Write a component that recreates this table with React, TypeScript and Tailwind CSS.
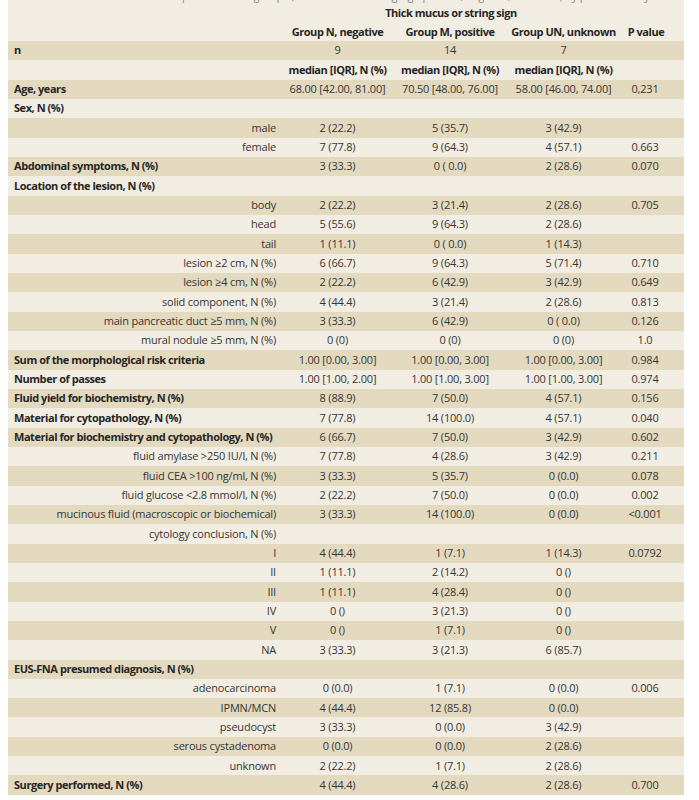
import React from "react";

type Row = {
  label: string;
  bold?: boolean;
  n?: string;
  m?: string;
  un?: string;
  p?: string;
  valuesBold?: boolean;
};

const rows: Row[] = [
  { label: "n", bold: true, n: "9", m: "14", un: "7" },
  { label: "", n: "median [IQR], N (%)", m: "median [IQR], N (%)", un: "median [IQR], N (%)", valuesBold: true },
  { label: "Age, years", bold: true, n: "68.00 [42.00, 81.00]", m: "70.50 [48.00, 76.00]", un: "58.00 [46.00, 74.00]", p: "0,231" },
  { label: "Sex, N (%)", bold: true },
  { label: "male", n: "2 (22.2)", m: "5 (35.7)", un: "3 (42.9)" },
  { label: "female", n: "7 (77.8)", m: "9 (64.3)", un: "4 (57.1)", p: "0.663" },
  { label: "Abdominal symptoms, N (%)", bold: true, n: "3 (33.3)", m: "0 ( 0.0)", un: "2 (28.6)", p: "0.070" },
  { label: "Location of the lesion, N (%)", bold: true },
  { label: "body", n: "2 (22.2)", m: "3 (21.4)", un: "2 (28.6)", p: "0.705" },
  { label: "head", n: "5 (55.6)", m: "9 (64.3)", un: "2 (28.6)" },
  { label: "tail", n: "1 (11.1)", m: "0 ( 0.0)", un: "1 (14.3)" },
  { label: "lesion ≥2 cm, N (%)", n: "6 (66.7)", m: "9 (64.3)", un: "5 (71.4)", p: "0.710" },
  { label: "lesion ≥4 cm, N (%)", n: "2 (22.2)", m: "6 (42.9)", un: "3 (42.9)", p: "0.649" },
  { label: "solid component, N (%)", n: "4 (44.4)", m: "3 (21.4)", un: "2 (28.6)", p: "0.813" },
  { label: "main pancreatic duct ≥5 mm, N (%)", n: "3 (33.3)", m: "6 (42.9)", un: "0 ( 0.0)", p: "0.126" },
  { label: "mural nodule ≥5 mm, N (%)", n: "0 (0)", m: "0 (0)", un: "0 (0)", p: "1.0" },
  { label: "Sum of the morphological risk criteria", bold: true, n: "1.00 [0.00, 3.00]", m: "1.00 [0.00, 3.00]", un: "1.00 [0.00, 3.00]", p: "0.984" },
  { label: "Number of passes", bold: true, n: "1.00 [1.00, 2.00]", m: "1.00 [1.00, 3.00]", un: "1.00 [1.00, 3.00]", p: "0.974" },
  { label: "Fluid yield for biochemistry, N (%)", bold: true, n: "8 (88.9)", m: "7 (50.0)", un: "4 (57.1)", p: "0.156" },
  { label: "Material for cytopathology, N (%)", bold: true, n: "7 (77.8)", m: "14 (100.0)", un: "4 (57.1)", p: "0.040" },
  { label: "Material for biochemistry and cytopathology, N (%)", bold: true, n: "6 (66.7)", m: "7 (50.0)", un: "3 (42.9)", p: "0.602" },
  { label: "fluid amylase >250 IU/l, N (%)", n: "7 (77.8)", m: "4 (28.6)", un: "3 (42.9)", p: "0.211" },
  { label: "fluid CEA >100 ng/ml, N (%)", n: "3 (33.3)", m: "5 (35.7)", un: "0 (0.0)", p: "0.078" },
  { label: "fluid glucose <2.8 mmol/l, N (%)", n: "2 (22.2)", m: "7 (50.0)", un: "0 (0.0)", p: "0.002" },
  { label: "mucinous fluid (macroscopic or biochemical)", n: "3 (33.3)", m: "14 (100.0)", un: "0 (0.0)", p: "<0.001" },
  { label: "cytology conclusion, N (%)" },
  { label: "I", n: "4 (44.4)", m: "1 (7.1)", un: "1 (14.3)", p: "0.0792" },
  { label: "II", n: "1 (11.1)", m: "2 (14.2)", un: "0 ()" },
  { label: "III", n: "1 (11.1)", m: "4 (28.4)", un: "0 ()" },
  { label: "IV", n: "0 ()", m: "3 (21.3)", un: "0 ()" },
  { label: "V", n: "0 ()", m: "1 (7.1)", un: "0 ()" },
  { label: "NA", n: "3 (33.3)", m: "3 (21.3)", un: "6 (85.7)" },
  { label: "EUS-FNA presumed diagnosis, N (%)", bold: true },
  { label: "adenocarcinoma", n: "0 (0.0)", m: "1 (7.1)", un: "0 (0.0)", p: "0.006" },
  { label: "IPMN/MCN", n: "4 (44.4)", m: "12 (85.8)", un: "0 (0.0)" },
  { label: "pseudocyst", n: "3 (33.3)", m: "0 (0.0)", un: "3 (42.9)" },
  { label: "serous cystadenoma", n: "0 (0.0)", m: "0 (0.0)", un: "2 (28.6)" },
  { label: "unknown", n: "2 (22.2)", m: "1 (7.1)", un: "2 (28.6)" },
  { label: "Surgery performed, N (%)", bold: true, n: "4 (44.4)", m: "4 (28.6)", un: "2 (28.6)", p: "0.700" },
];

const strong = "font-bold tracking-[-0.45px] text-[#262626]";

function DataRow({ row, index }: { row: Row; index: number }) {
  const vb = row.valuesBold ? strong : "";
  return (
    <div
      className={`flex h-[19.33px] items-center ${
        index % 2 === 0 ? "bg-[#e2d9bf]" : "bg-[#f2ede2]"
      }`}
    >
      <div
        className={`w-[277px] whitespace-nowrap ${
          row.bold ? `pl-[6px] text-left ${strong}` : "pr-[9px] text-right"
        }`}
      >
        {row.label}
      </div>
      <div className={`w-[105px] text-center whitespace-pre ${vb}`}>{row.n}</div>
      <div className={`w-[120px] text-center whitespace-pre ${vb}`}>{row.m}</div>
      <div className={`w-[107px] text-center whitespace-pre ${vb}`}>{row.un}</div>
      <div className="w-[56px] text-center">{row.p}</div>
    </div>
  );
}

export default function App() {
  return (
    <div className="min-h-screen bg-white pl-[8px] text-[11px] tracking-[-0.2px] text-[#363636] font-['Open_Sans',sans-serif]">
      <div className="w-[676px] bg-[#f2ede2]">
        {/* caption line, mostly cut off above */}
        <div className="h-[4px] overflow-hidden">
          <div className="-mt-[11px] h-[15px] whitespace-nowrap pl-[110px] leading-[13px] text-[#888]">
            Table 2. Comparison of the groups (thick mucus or string sign positive, negative, unknown) by patient and cyst characteristics
          </div>
        </div>
        {/* header */}
        <div className={`flex h-[19px] items-center ${strong}`}>
          <div className="w-[277px]" />
          <div className="w-[332px] text-center">Thick mucus or string sign</div>
        </div>
        <div className={`flex h-[18px] items-center ${strong}`}>
          <div className="w-[277px]" />
          <div className="w-[105px] text-center whitespace-nowrap">Group N, negative</div>
          <div className="w-[120px] text-center whitespace-nowrap">Group M, positive</div>
          <div className="w-[107px] text-center whitespace-nowrap">Group UN, unknown</div>
          <div className="w-[56px] pl-[2px] text-center whitespace-nowrap">P value</div>
        </div>
        {rows.map((row, i) => (
          <DataRow key={i} row={row} index={i} />
        ))}
      </div>
    </div>
  );
}
